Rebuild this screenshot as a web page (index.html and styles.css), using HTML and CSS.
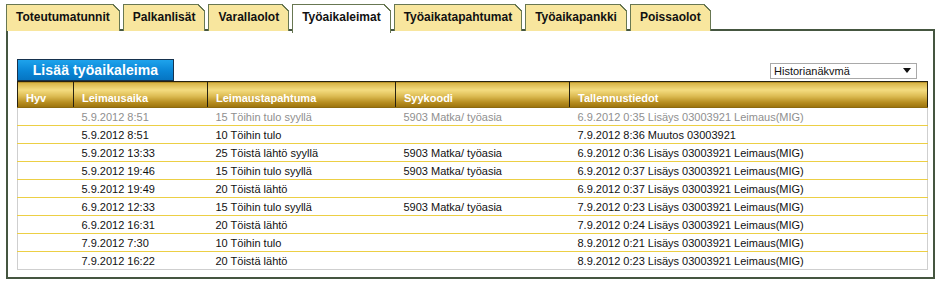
FILE: index.html
```html
<!DOCTYPE html>
<html lang="fi">

  <head>
    <meta charset="UTF-8">
    <meta name="viewport" content="width=device-width, initial-scale=1.0">
    <title>Työaikaleimat</title>
    <link rel="stylesheet" href="styles.css">
  </head>

  <body>
    <!-- välilehdet -->
    <div class="tabs">
      <div class="tab">Toteutumatunnit</div>
      <div class="tab">Palkanlisät</div>
      <div class="tab">Varallaolot</div>
      <div class="tab active">Työaikaleimat</div>
      <div class="tab">Työaikatapahtumat</div>
      <div class="tab">Työaikapankki</div>
      <div class="tab">Poissaolot</div>
    </div>

    <div class="panel">
      <div class="toolbar">
        <div class="add_btn">Lisää työaikaleima</div>
        <div class="view_select">
          <span>Historianäkvmä</span>
          <i class="arrow"></i>
        </div>
      </div>

      <table class="stamps">
        <colgroup>
          <col style="width:56px">
          <col style="width:134px">
          <col style="width:188px">
          <col style="width:174px">
          <col>
        </colgroup>
        <thead>
          <tr>
            <th>Hyv</th>
            <th>Leimausaika</th>
            <th>Leimaustapahtuma</th>
            <th>Syykoodi</th>
            <th>Tallennustiedot</th>
          </tr>
        </thead>
        <tbody>
          <tr class="old">
            <td></td>
            <td>5.9.2012 8:51</td>
            <td>15 Töihin tulo syyllä</td>
            <td>5903 Matka/ työasia</td>
            <td>6.9.2012 0:35 Lisäys 03003921 Leimaus(MIG)</td>
          </tr>
          <tr>
            <td></td>
            <td>5.9.2012 8:51</td>
            <td>10 Töihin tulo</td>
            <td></td>
            <td>7.9.2012 8:36 Muutos 03003921</td>
          </tr>
          <tr>
            <td></td>
            <td>5.9.2012 13:33</td>
            <td>25 Töistä lähtö syyllä</td>
            <td>5903 Matka/ työasia</td>
            <td>6.9.2012 0:36 Lisäys 03003921 Leimaus(MIG)</td>
          </tr>
          <tr>
            <td></td>
            <td>5.9.2012 19:46</td>
            <td>15 Töihin tulo syyllä</td>
            <td>5903 Matka/ työasia</td>
            <td>6.9.2012 0:37 Lisäys 03003921 Leimaus(MIG)</td>
          </tr>
          <tr>
            <td></td>
            <td>5.9.2012 19:49</td>
            <td>20 Töistä lähtö</td>
            <td></td>
            <td>6.9.2012 0:37 Lisäys 03003921 Leimaus(MIG)</td>
          </tr>
          <tr>
            <td></td>
            <td>6.9.2012 12:33</td>
            <td>15 Töihin tulo syyllä</td>
            <td>5903 Matka/ työasia</td>
            <td>7.9.2012 0:23 Lisäys 03003921 Leimaus(MIG)</td>
          </tr>
          <tr>
            <td></td>
            <td>6.9.2012 16:31</td>
            <td>20 Töistä lähtö</td>
            <td></td>
            <td>7.9.2012 0:24 Lisäys 03003921 Leimaus(MIG)</td>
          </tr>
          <tr>
            <td></td>
            <td>7.9.2012 7:30</td>
            <td>10 Töihin tulo</td>
            <td></td>
            <td>8.9.2012 0:21 Lisäys 03003921 Leimaus(MIG)</td>
          </tr>
          <tr>
            <td></td>
            <td>7.9.2012 16:22</td>
            <td>20 Töistä lähtö</td>
            <td></td>
            <td>8.9.2012 0:23 Lisäys 03003921 Leimaus(MIG)</td>
          </tr>
        </tbody>
      </table>
    </div>
  </body>

</html>
```

FILE: styles.css
```css
* {
  margin: 0;
  padding: 0;
  box-sizing: border-box;
}

body {
  background-color: #fff;
  font-family: "Liberation Sans", Arial, sans-serif;
  color: #111;
}

/* välilehdet */
.tabs {
  display: flex;
  gap: 3px;
  padding: 4px 0 0 6px;
  height: 31px;
  position: relative;
  z-index: 2;
}

.tab {
  position: relative;
  height: 27px;
  line-height: 25px;
  padding: 0 9px;
  font-size: 12px;
  font-weight: bold;
  background-color: #f8e69e;
  border: 1px solid #687752;
  border-bottom: none;
}

.tab::after {
  content: "";
  position: absolute;
  top: -1px;
  right: -1px;
  width: 7px;
  height: 7px;
  background: linear-gradient(to bottom left, #fff 0 48%, #687752 48% 62%, transparent 62%);
}

.tab.active {
  background-color: #fff;
  height: 29px;
}

.panel {
  margin: -2px 0 0 6px;
  width: 929px;
  height: 250px;
  border: 2px solid #455640;
  padding: 27px 6px 0 9px;
}

.toolbar {
  display: flex;
  justify-content: space-between;
  align-items: flex-end;
  height: 23px;
}

.add_btn {
  width: 157px;
  height: 22px;
  line-height: 20px;
  text-align: center;
  font-size: 14px;
  font-weight: bold;
  color: #fff;
  letter-spacing: 0.1px;
  background: linear-gradient(#1ea3ec, #0a86d6 55%, #0675c2);
  border: 1px solid #16324e;
}

.view_select {
  position: relative;
  width: 147px;
  height: 16px;
  margin: 0 10px 2px 0;
  border: 1px solid #a9a9a9;
  background: #fff;
  font-size: 11px;
  line-height: 14px;
  padding-left: 3px;
  color: #111;
}

.arrow {
  position: absolute;
  right: 5px;
  top: 4px;
  width: 0;
  height: 0;
  border-left: 4px solid transparent;
  border-right: 4px solid transparent;
  border-top: 5px solid #111;
}

/* taulukko */
.stamps {
  width: 911px;
  table-layout: fixed;
  border-collapse: collapse;
  font-size: 11px;
}

.stamps th {
  height: 26px;
  text-align: left;
  vertical-align: bottom;
  padding: 0 0 3px 8px;
  color: #fff;
  font-weight: bold;
  background: linear-gradient(#d6b143 0%, #f4dc80 30%, #dcbb52 55%, #b68c1f 80%, #9a720c 100%);
  border: 1px solid #262110;
  border-bottom-color: #8c6a10;
}

.stamps td {
  height: 18px;
  padding: 0 0 0 8px;
  white-space: nowrap;
  border-bottom: 1px solid #eccf45;
}

.stamps tbody tr td:first-child {
  border-left: 1px solid #cfcfcf;
}

.stamps tbody tr td:last-child {
  border-right: 1px solid #cfcfcf;
}

.stamps tbody tr:last-child td {
  border-bottom-color: #cfcfcf;
}

.stamps tr.old td {
  color: #8f8f8f;
}
```
